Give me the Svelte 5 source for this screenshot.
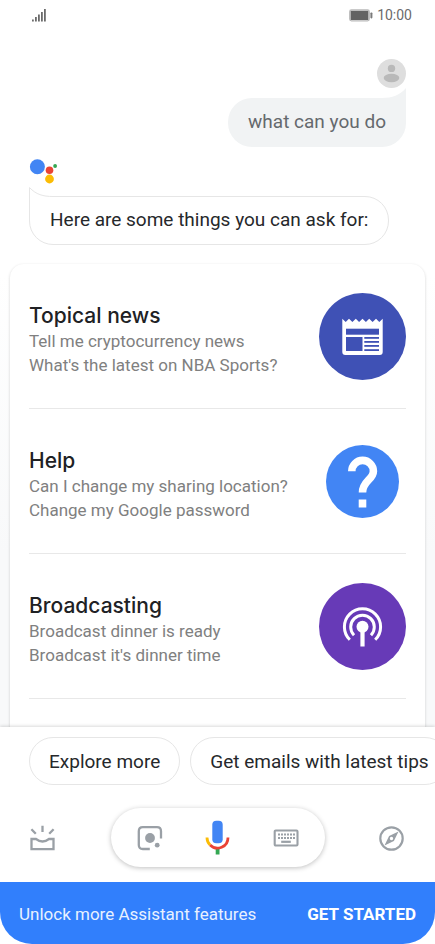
<script>
  const topics = [
    {
      icon: "news",
      title: "Topical news",
      examples: ["Tell me cryptocurrency news", "What's the latest on NBA Sports?"],
    },
    {
      icon: "help",
      title: "Help",
      examples: ["Can I change my sharing location?", "Change my Google password"],
    },
    {
      icon: "broadcast",
      title: "Broadcasting",
      examples: ["Broadcast dinner is ready", "Broadcast it's dinner time"],
    },
  ];

  const suggestions = ["Explore more", "Get emails with latest tips"];

  const keyColumns = [5, 8, 11, 14, 17, 20];
</script>

<div class="screen">
  <header class="status">
    <svg width="15" height="13" viewBox="0 0 15 13" fill="#6b6b6b" aria-hidden="true">
      <rect x="0" y="10.5" width="1.8" height="2" />
      <rect x="3" y="8" width="1.8" height="4.5" />
      <rect x="6" y="5.5" width="1.8" height="7" />
      <rect x="9" y="3" width="1.8" height="9.5" />
      <rect x="12" y="0" width="1.8" height="12.5" />
    </svg>
    <div class="power">
      <svg width="24" height="13" viewBox="0 0 24 13" aria-hidden="true">
        <rect x="0.7" y="0.9" width="19.6" height="11" rx="1.8" fill="#fff" stroke="#b9b9b9" stroke-width="1.2" />
        <rect x="1.6" y="1.8" width="17.8" height="9.2" rx="0.6" fill="#636363" />
        <rect x="21.4" y="3.4" width="2" height="6" rx="0.8" fill="#7a7a7a" />
      </svg>
      <span>10:00</span>
    </div>
  </header>

  <main class="chat">
    <div class="query">
      <svg class="avatar" viewBox="0 0 29 29" aria-hidden="true">
        <circle cx="14.5" cy="14.5" r="14.5" fill="#dedede" />
        <circle cx="14.5" cy="9.4" r="3.7" fill="#b9b9b9" />
        <ellipse cx="14.5" cy="19" rx="7.8" ry="4.2" fill="#b9b9b9" />
      </svg>
      <div class="bubble asked">
        <svg class="tail" viewBox="0 0 24 12" aria-hidden="true">
          <path d="M0 10 C10 10 18 7 24 0 V12 H0 Z" fill="#f1f3f4" />
        </svg>
        what can you do
      </div>
    </div>

    <div class="answer">
      <svg class="logo" viewBox="0 0 30 27" aria-hidden="true">
        <circle cx="8.4" cy="8.7" r="7.5" fill="#4285f4" />
        <circle cx="20.5" cy="12.3" r="3.8" fill="#ea4335" />
        <circle cx="20.5" cy="21" r="4.4" fill="#fbbc05" />
        <circle cx="26.1" cy="8" r="1.9" fill="#34a853" />
      </svg>
      <div class="bubble replied">
        <svg class="tail" viewBox="0 0 24 12" aria-hidden="true">
          <path d="M0 0 V12 H24 V9 Z" fill="#fff" />
          <path d="M0.5 12 V0.5 C7 7.5 14 9.5 24 9.5" fill="none" stroke="#e6e6e6" />
        </svg>
        Here are some things you can ask for:
      </div>
    </div>

    <section class="card">
      {#each topics as topic}
        <article class="topic">
          <div class="words">
            <h2>{topic.title}</h2>
            {#each topic.examples as example}
              <p>{example}</p>
            {/each}
          </div>
          {#if topic.icon === "news"}
            <svg width="87" height="87" viewBox="0 0 87 87" aria-hidden="true">
              <circle cx="43.5" cy="43.5" r="43.5" fill="#3f51b5" />
              <path
                d="M23.3 25.7 L26.7 29 L30 25.7 L33.4 29 L36.8 25.7 L40.1 29 L43.5 25.7 L46.9 29 L50.2 25.7 L53.6 29 L57 25.7 L60.3 29 L63.7 25.7 V59 Q63.7 62 60.7 62 H26.3 Q23.3 62 23.3 59 Z"
                fill="#fff"
              />
              <g fill="#3f51b5">
                <rect x="27" y="35.7" width="33" height="6" />
                <rect x="27" y="44" width="16.5" height="14" />
                <rect x="45.3" y="44" width="14.7" height="1.8" />
                <rect x="45.3" y="48" width="14.7" height="1.8" />
                <rect x="45.3" y="52" width="14.7" height="1.8" />
                <rect x="45.3" y="56.2" width="14.7" height="1.8" />
              </g>
            </svg>
          {:else if topic.icon === "help"}
            <svg class="small" width="73" height="73" viewBox="0 0 73 73" aria-hidden="true">
              <circle cx="36.5" cy="36.5" r="36.5" fill="#4285f4" />
              <path
                d="M25.8 26.2 A10.8 10.8 0 0 1 47.4 26.2 C47.4 34.5 36.5 36 36.5 47.5"
                fill="none"
                stroke="#fff"
                stroke-width="7.6"
              />
              <rect x="32.7" y="54.5" width="7.6" height="8" fill="#fff" />
            </svg>
          {:else}
            <svg width="87" height="87" viewBox="0 0 87 87" aria-hidden="true">
              <circle cx="43.5" cy="43.5" r="43.5" fill="#673ab7" />
              <circle cx="43.5" cy="43.8" r="6" fill="#fff" />
              <rect x="41.4" y="46" width="4.2" height="17.5" fill="#fff" />
              <g fill="none" stroke="#fff" stroke-width="3">
                <path d="M30.8 56.8 A18.1 18.1 0 1 1 56.2 56.8" />
                <path d="M35 52.2 A11.8 11.8 0 1 1 52 52.2" />
              </g>
            </svg>
          {/if}
        </article>
      {/each}
    </section>
  </main>

  <footer class="dock">
    <div class="chips">
      {#each suggestions as suggestion}
        <button class="chip">{suggestion}</button>
      {/each}
    </div>

    <nav class="toolbar">
      <button class="tool" aria-label="Updates">
        <svg width="26" height="26" viewBox="0 0 26 26" fill="none" stroke="#9aa0a6" stroke-width="2.3">
          <path d="M1.5 14 H6 Q12.5 19 19 14 H23.5 V24.2 H1.5 Z" />
          <path d="M12.5 0.8 V7 M1.4 4.2 L5.8 8.8 M23.6 4.2 L19.2 8.8" />
        </svg>
      </button>

      <div class="pill">
        <button class="tool" aria-label="Lens">
          <svg width="26" height="26" viewBox="0 0 26 26">
            <path
              d="M12.8 24 H5.8 Q1.8 24 1.8 20 V6.2 Q1.8 2.2 5.8 2.2 H20 Q24 2.2 24 6.2 V13.4"
              fill="none"
              stroke="#9aa0a6"
              stroke-width="2.3"
            />
            <circle cx="13" cy="13" r="4.9" fill="#9aa0a6" />
            <circle cx="20.2" cy="20.2" r="2.4" fill="#9aa0a6" />
          </svg>
        </button>
        <button class="tool" aria-label="Speak">
          <svg width="25" height="35" viewBox="0 0 25 35">
            <rect x="7.3" y="0.8" width="10.4" height="22.4" rx="4" fill="#4285f4" />
            <rect x="10.7" y="28.5" width="3.8" height="6" fill="#34a853" />
            <g fill="none" stroke-width="2.8">
              <path d="M2 17.4 A10.5 10.5 0 0 0 5.1 25" stroke="#fbbc05" />
              <path d="M5.1 25 A10.5 10.5 0 0 0 23 17.4" stroke="#ea4335" />
            </g>
          </svg>
        </button>
        <button class="tool" aria-label="Keyboard">
          <svg width="26" height="18" viewBox="0 0 26 18" fill="#9aa0a6">
            <rect x="1.7" y="1.5" width="22.8" height="15" rx="1" fill="none" stroke="#9aa0a6" stroke-width="2.1" />
            {#each keyColumns as x}
              <rect {x} y="4.5" width="2" height="2" />
              <rect {x} y="8" width="2" height="2" />
            {/each}
            <rect x="8.2" y="11.7" width="9.6" height="2.2" />
          </svg>
        </button>
      </div>

      <button class="tool" aria-label="Explore">
        <svg width="26" height="26" viewBox="0 0 26 26">
          <circle cx="12.5" cy="13.5" r="11.2" fill="none" stroke="#9aa0a6" stroke-width="2.2" />
          <path
            d="M19.5 6.5 L14.9 15.9 L5.5 20.5 L10.1 11.1 Z M12.5 11.8 A1.7 1.7 0 1 0 12.5 15.2 A1.7 1.7 0 1 0 12.5 11.8 Z"
            fill="#9aa0a6"
            fill-rule="evenodd"
          />
        </svg>
      </button>
    </nav>

    <div class="banner">
      <span>Unlock more Assistant features</span>
      <button class="start">GET STARTED</button>
    </div>
  </footer>
</div>

<style>
  :global(body) {
    margin: 0;
    background: #fff;
  }

  .screen {
    display: flex;
    flex-direction: column;
    min-height: 100vh;
    font-family: Roboto, "Liberation Sans", sans-serif;
    color: #26282b;
  }

  svg {
    display: block;
    flex: none;
  }

  button {
    font-family: inherit;
    cursor: pointer;
  }

  .status {
    display: flex;
    align-items: center;
    justify-content: space-between;
    height: 30px;
    padding: 0 23px 0 32px;
    font-size: 14px;
    color: #6b6b6b;
  }

  .power {
    display: flex;
    align-items: center;
    gap: 4px;
  }

  .chat {
    flex: 1;
    display: flex;
    flex-direction: column;
    padding: 29px 10px 0;
    background: linear-gradient(#fff 35%, #f8f9fa 75%);
  }

  .query {
    display: flex;
    flex-direction: column;
    align-items: flex-end;
    padding: 0 19px;
  }

  .avatar {
    width: 29px;
    height: 29px;
  }

  .bubble {
    position: relative;
    box-sizing: border-box;
    height: 49px;
    padding: 0 20px;
    font-size: 19px;
    line-height: 48px;
  }

  .asked {
    margin-top: 10px;
    background: #f1f3f4;
    border-radius: 24px 0 24px 24px;
    color: #65696d;
  }

  .tail {
    position: absolute;
    top: -10px;
    width: 24px;
    height: 12px;
  }

  .asked .tail {
    right: 0;
  }

  .answer {
    display: flex;
    flex-direction: column;
    align-items: flex-start;
    margin-top: 11px;
    padding: 0 19px;
  }

  .logo {
    width: 30px;
    height: 27px;
  }

  .replied {
    margin-top: 11px;
    background: #fff;
    border: 1px solid #e6e6e6;
    border-radius: 0 24px 24px 24px;
    line-height: 46px;
  }

  .replied .tail {
    left: -1px;
  }

  .card {
    flex: 1;
    margin-top: 19px;
    padding: 0 19px 28px;
    background: #fff;
    border-radius: 14px 14px 0 0;
    box-shadow: 0 1px 3px rgba(0, 0, 0, 0.18);
  }

  .topic {
    display: flex;
    align-items: center;
    justify-content: space-between;
    box-sizing: border-box;
    height: 145px;
    border-bottom: 1px solid #e8e8e8;
  }

  .topic .small {
    margin-right: 7px;
  }

  .words {
    padding-top: 8px;
  }

  .topic h2 {
    margin: 0;
    font-family: Inter, Roboto, sans-serif;
    font-size: 21px;
    font-weight: 500;
    line-height: 26px;
    color: #202124;
  }

  .topic p {
    margin: 0;
    font-size: 17px;
    line-height: 24px;
    color: #808080;
  }

  .dock {
    position: relative;
    background: #fff;
    box-shadow: 0 -1px 3px rgba(0, 0, 0, 0.15);
  }

  .chips {
    display: flex;
    gap: 10px;
    padding: 10px 0 0 29px;
    overflow: hidden;
  }

  .chip {
    flex: none;
    height: 48px;
    padding: 0 19px;
    background: #fff;
    border: 1px solid #e6e6e6;
    border-radius: 24px;
    font-size: 19px;
    color: #26282b;
  }

  .toolbar {
    display: flex;
    align-items: center;
    justify-content: space-between;
    padding: 23px 30px 15px;
  }

  .tool {
    display: flex;
    padding: 0;
    background: none;
    border: none;
  }

  .pill {
    display: flex;
    align-items: center;
    justify-content: space-between;
    box-sizing: border-box;
    width: 214px;
    height: 59px;
    padding: 0 26px;
    border-radius: 30px;
    background: #fff;
    box-shadow: 0 1px 5px rgba(0, 0, 0, 0.25);
  }

  .banner {
    display: flex;
    align-items: center;
    justify-content: space-between;
    box-sizing: border-box;
    height: 62px;
    padding: 2px 19px 0;
    background: #317ffc;
    border-radius: 0 0 32px 32px;
    font-size: 17px;
    color: #e8f1ff;
  }

  .start {
    padding: 0;
    background: none;
    border: none;
    font-size: 17px;
    font-weight: 700;
    color: #fff;
  }
</style>
